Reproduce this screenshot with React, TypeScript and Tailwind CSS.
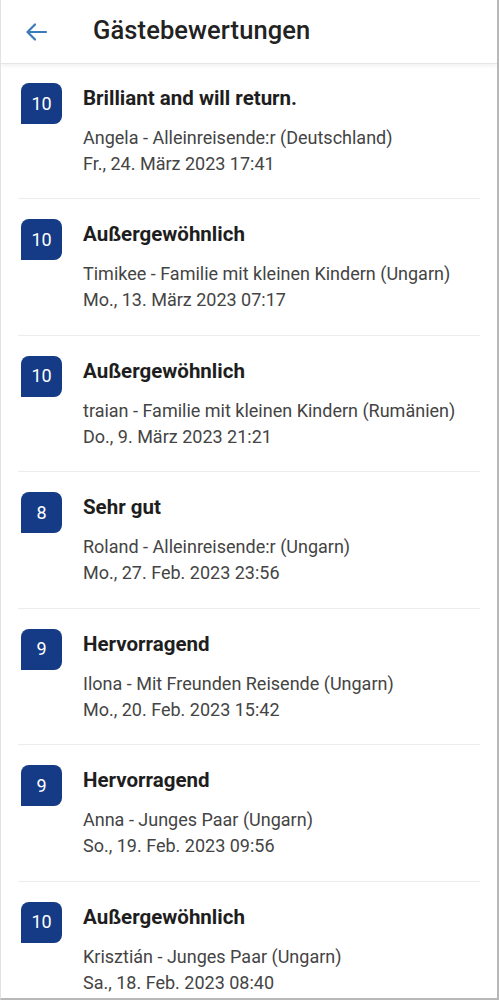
import React from "react";

const reviews = [
  { score: "10", title: "Brilliant and will return.", who: "Angela - Alleinreisende:r (Deutschland)", date: "Fr., 24. März 2023 17:41" },
  { score: "10", title: "Außergewöhnlich", who: "Timikee - Familie mit kleinen Kindern (Ungarn)", date: "Mo., 13. März 2023 07:17" },
  { score: "10", title: "Außergewöhnlich", who: "traian - Familie mit kleinen Kindern (Rumänien)", date: "Do., 9. März 2023 21:21" },
  { score: "8", title: "Sehr gut", who: "Roland - Alleinreisende:r (Ungarn)", date: "Mo., 27. Feb. 2023 23:56" },
  { score: "9", title: "Hervorragend", who: "Ilona - Mit Freunden Reisende (Ungarn)", date: "Mo., 20. Feb. 2023 15:42" },
  { score: "9", title: "Hervorragend", who: "Anna - Junges Paar (Ungarn)", date: "So., 19. Feb. 2023 09:56" },
  { score: "10", title: "Außergewöhnlich", who: "Krisztián - Junges Paar (Ungarn)", date: "Sa., 18. Feb. 2023 08:40" },
];

export default function App() {
  return (
    <div
      className="w-[499px] h-[1000px] overflow-hidden bg-white border-l border-l-[#e2e2e2] border-r-2 border-r-[#b8b8b8] border-b-2 border-b-[#b8b8b8] flex flex-col"
      style={{ fontFamily: "Roboto, 'Noto Sans', Arial, sans-serif" }}
    >
      <header className="h-[64px] shrink-0 flex items-center border-b border-[#e6e6e6] shadow-[0_2px_4px_rgba(0,0,0,0.06)] relative z-10">
        <div className="w-[92px] pl-[24px] flex items-center">
          <svg width="23" height="20" viewBox="0 0 23 20" fill="none" stroke="#3a7bbd" strokeWidth="2.2" strokeLinecap="round" strokeLinejoin="round">
            <path d="M21 10H3" />
            <path d="M10 2.5L2.5 10L10 17.5" />
          </svg>
        </div>
        <h1 className="text-[25.5px] font-medium text-[#222] leading-none tracking-[0.1px] -mt-[2px]">Gästebewertungen</h1>
      </header>
      <div className="flex flex-col">
        {reviews.map((r, i) => (
          <div key={i} className={`flex pl-[20px] ${i === 0 ? "pt-[19px] h-[134px]" : "pt-[21px] h-[136.5px]"} relative`}>
            {i > 0 && <div className="absolute top-0 left-[17px] right-[17px] h-px bg-[#ececec]" />}
            <div className="w-[41px] h-[41px] shrink-0 bg-[#163b86] rounded-tl-[8px] rounded-tr-[8px] rounded-br-[8px] rounded-bl-none flex items-center justify-center text-white text-[18px] leading-none">
              {r.score}
            </div>
            <div className="ml-[21px] flex flex-col">
              <div className="text-[20.5px] font-bold text-[#1e1e1e] leading-[24px] mt-[3px]">{r.title}</div>
              <div className="text-[18px] text-[#444] leading-[26px] mt-[15px]">{r.who}</div>
              <div className="text-[18px] text-[#444] leading-[26px]">{r.date}</div>
            </div>
          </div>
        ))}
      </div>
    </div>
  );
}
